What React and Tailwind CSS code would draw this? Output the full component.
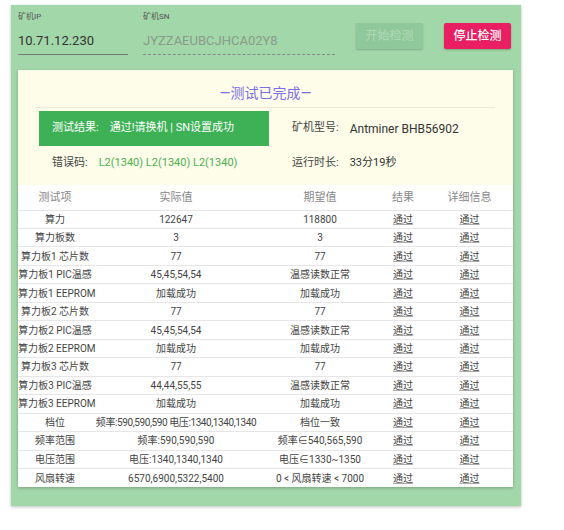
import React from 'react';

const rows = [
    ['算力', '122647', '118800'],
    ['算力板数', '3', '3'],
    ['算力板1 芯片数', '77', '77'],
    ['算力板1 PIC温感', '45,45,54,54', '温感读数正常'],
    ['算力板1 EEPROM', '加载成功', '加载成功'],
    ['算力板2 芯片数', '77', '77'],
    ['算力板2 PIC温感', '45,45,54,54', '温感读数正常'],
    ['算力板2 EEPROM', '加载成功', '加载成功'],
    ['算力板3 芯片数', '77', '77'],
    ['算力板3 PIC温感', '44,44,55,55', '温感读数正常'],
    ['算力板3 EEPROM', '加载成功', '加载成功'],
    ['档位', '频率:590,590,590 电压:1340,1340,1340', '档位一致'],
    ['频率范围', '频率:590,590,590', '频率∈540,565,590'],
    ['电压范围', '电压:1340,1340,1340', '电压∈1330~1350'],
    ['风扇转速', '6570,6900,5322,5400', '0 < 风扇转速 < 7000'],
];

const font = { fontFamily: 'Roboto, "Noto Sans CJK SC", sans-serif' };

function Field({ label, value, width, dashed, muted }) {
    return (
        <div className={`flex flex-col ${width}`}>
            <span className="text-[8px] leading-[10px] text-[#555] mt-[7px]">{label}</span>
            <span className={`text-[13px] leading-[16px] mt-[11px] ${muted ? 'text-[#8a9a8c]' : 'text-[#333]'}`}>{value}</span>
            <div className={`mt-[5px] border-b ${dashed ? 'border-dashed border-[#888]' : 'border-[#6f7a70]'}`} />
        </div>
    );
}

export default function App() {
    return (
        <div className="bg-white w-[564px] h-[530px]" style={font}>
            <div className="pt-[5px] pl-[11px]">
                <div className="w-[510px] bg-[#a2d7a9] pb-[19px] shadow-[0_1px_3px_rgba(0,0,0,0.25)]">
                    <div className="h-[65px] flex px-[7px]">
                        <Field label="矿机IP" value="10.71.12.230" width="w-[110px]" />
                        <div className="w-[15px]" />
                        <Field label="矿机SN" value="JYZZAEUBCJHCA02Y8" width="w-[192px]" dashed muted />
                        <div className="ml-[21px] mt-[18px] flex gap-[21px]">
                            <button className="w-[67px] h-[26px] rounded-[2px] bg-[#8fc89a] text-[#b2d9b8] text-[12px] shadow-[0_1px_2px_rgba(0,0,0,0.2)]">开始检测</button>
                            <button className="w-[67px] h-[26px] rounded-[2px] bg-[#e91e63] text-white text-[12px] font-medium shadow-[0_1px_2px_rgba(0,0,0,0.25)]">停止检测</button>
                        </div>
                    </div>
                    <div className="mx-[7px] w-[495px] bg-white shadow-[0_1px_3px_rgba(0,0,0,0.25)]">
                        <div className="h-[115px] bg-[#fdfde9] pt-[14px]">
                            <div className="text-center text-[14px] leading-[18px] text-[#7b6ee6]">—测试已完成—</div>
                            <div className="mx-[18px] mt-[5px] border-b border-[#e8e8d8]" />
                            <div className="grid grid-cols-[274px_1fr] mt-[3px]">
                                <div className="ml-[21px] w-[230px] h-[35px] bg-[#3eb157] flex items-center text-white text-[11px] pl-[13px]">
                                    <span>测试结果:</span>
                                    <span className="ml-[11px]">通过!请换机 | SN设置成功</span>
                                </div>
                                <div className="flex items-center text-[11px] text-[#444]">
                                    <span>矿机型号:</span>
                                    <span className="ml-[11px] text-[12px] text-[#333]">Antminer BHB56902</span>
                                </div>
                                <div className="h-[34px] flex items-center text-[11px] pl-[34px]">
                                    <span className="text-[#444]">错误码:</span>
                                    <span className="ml-[11px] text-[#4caf50]">L2(1340) L2(1340) L2(1340)</span>
                                </div>
                                <div className="h-[34px] flex items-center text-[11px] text-[#444]">
                                    <span>运行时长:</span>
                                    <span className="ml-[11px] text-[#333]">33分19秒</span>
                                </div>
                            </div>
                        </div>
                        <table className="w-full border-collapse table-fixed text-[10px] text-[#444]">
                            <colgroup>
                                <col className="w-[74px]" />
                                <col className="w-[168px]" />
                                <col className="w-[120px]" />
                                <col className="w-[46px]" />
                                <col />
                            </colgroup>
                            <thead>
                                <tr className="h-[25px] text-[11px] text-[#888]">
                                    <th className="font-normal pt-[2px]">测试项</th>
                                    <th className="font-normal pt-[2px]">实际值</th>
                                    <th className="font-normal pt-[2px]">期望值</th>
                                    <th className="font-normal pt-[2px]">结果</th>
                                    <th className="font-normal pt-[2px]">详细信息</th>
                                </tr>
                            </thead>
                            <tbody>
                                {rows.map((r, i) => (
                                    <tr key={i} className="h-[18.47px] border-t border-[#e6e6e6] text-center">
                                        <td className="whitespace-nowrap p-0">{r[0]}</td>
                                        <td className={`whitespace-nowrap p-0 ${i === 11 ? 'tracking-[-0.4px]' : ''}`}>{r[1]}</td>
                                        <td className="whitespace-nowrap p-0">{r[2]}</td>
                                        <td className="p-0 underline decoration-[#aaa]">通过</td>
                                        <td className="p-0 underline decoration-[#aaa]">通过</td>
                                    </tr>
                                ))}
                            </tbody>
                        </table>
                    </div>
                </div>
            </div>
        </div>
    );
}
